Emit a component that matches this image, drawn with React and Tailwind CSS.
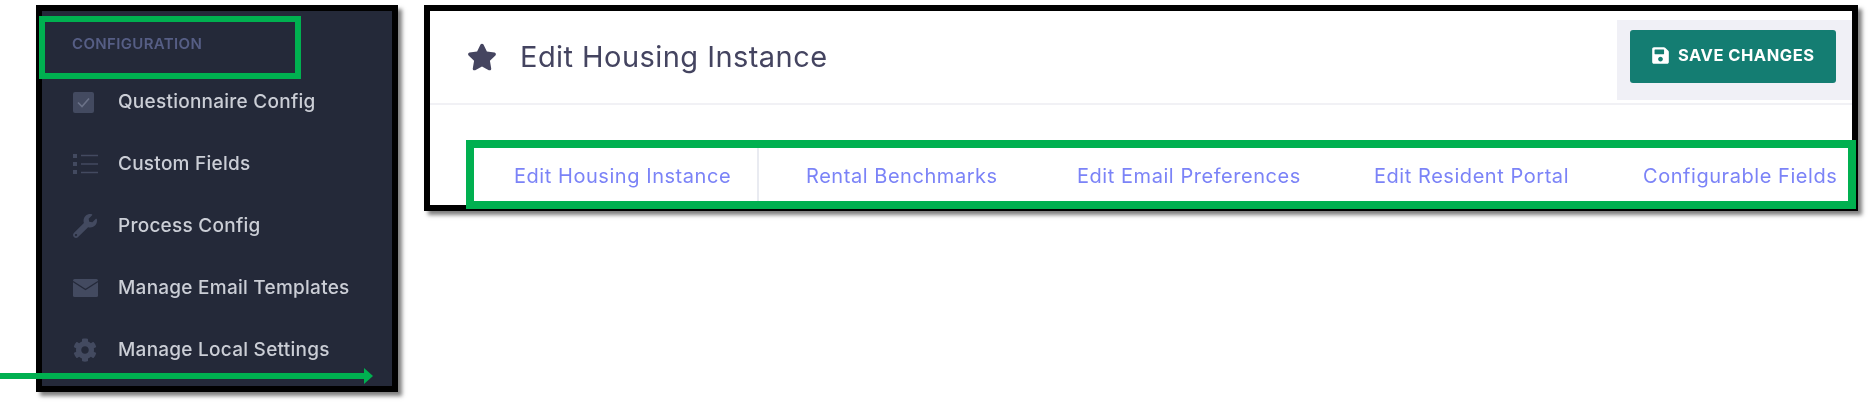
import React from "react";
import { FaStar, FaSave, FaWrench, FaCog } from "react-icons/fa";

const font = { fontFamily: '"Inter", "Noto Sans", sans-serif' };

const CheckIcon = () => (
  <svg width="21" height="21" viewBox="0 0 21 21" className="text-[#434a60]">
    <rect width="21" height="21" rx="2" fill="currentColor" />
    <path d="M5 10.5l4 4 7-8" fill="none" stroke="#6b7288" strokeWidth="1.6" />
  </svg>
);

const ListIcon = () => (
  <svg width="25" height="21" viewBox="0 0 25 21" className="text-[#434a60]">
    <rect x="0" y="0" width="4" height="4" fill="currentColor" />
    <rect x="0" y="8" width="4" height="4" fill="currentColor" />
    <rect x="0" y="16" width="4" height="4" fill="currentColor" />
    <path d="M8 1.5h17M8 10h17M8 18.5h17" stroke="currentColor" strokeWidth="1.4" />
  </svg>
);

const MailIcon = () => (
  <svg width="25" height="18" viewBox="0 0 25 18" className="text-[#434a60]">
    <rect width="25" height="18" rx="1.5" fill="currentColor" />
    <path d="M0 2.5l12.5 8 12.5-8" fill="none" stroke="#242939" strokeWidth="1.3" />
  </svg>
);

const menu = [
  { label: "Questionnaire Config", icon: <CheckIcon /> },
  { label: "Custom Fields", icon: <ListIcon /> },
  { label: "Process Config", icon: <FaWrench className="text-[#434a60]" size={24} /> },
  { label: "Manage Email Templates", icon: <MailIcon /> },
  { label: "Manage Local Settings", icon: <FaCog className="text-[#434a60]" size={24} /> },
];

const tabs = [
  { label: "Edit Housing Instance", cls: "w-[329px] pl-[84px] border-r-2 border-[#e9ebf1]" },
  { label: "Rental Benchmarks", cls: "w-[318px] pl-[47px]" },
  { label: "Edit Email Preferences", cls: "w-[297px]" },
  { label: "Edit Resident Portal", cls: "w-[269px]" },
  { label: "Configurable Fields", cls: "" },
];

export default function App() {
  return (
    <div className="relative h-[405px] w-[1871px] overflow-hidden bg-white pl-[36px] pt-[5px]" style={font}>
      <div className="flex items-start gap-[26px]">
        {/* Sidebar */}
        <div className="h-[387px] w-[362px] border-[6px] border-black bg-[#242939] pl-[30px] pt-[14px] shadow-[4px_4px_4px_rgba(0,0,0,0.5)]">
          <div className="blur-[0.4px]">
            <div className="flex h-[38px] items-center text-[15px] font-semibold tracking-[0.35px] text-[#565e85]">CONFIGURATION</div>
            <div className="mt-[20px] flex flex-col gap-[24px]">
              {menu.map((m) => (
                <div key={m.label} className="flex h-[38px] items-center">
                  <div className="flex w-[46px] shrink-0 pl-px">{m.icon}</div>
                  <span className="text-[19px] font-medium tracking-[0.25px] text-[#cbced6]">{m.label}</span>
                </div>
              ))}
            </div>
          </div>
        </div>

        {/* Main panel */}
        <div className="h-[206px] w-[1434px] border-[6px] border-black bg-white shadow-[4px_4px_4px_rgba(0,0,0,0.5)]">
          <div className="blur-[0.4px]">
            <div className="flex h-[94px] items-start justify-between border-b-2 border-[#f1f1f5] pl-[37px]">
              <div className="flex h-[92px] items-center">
                <FaStar className="text-[#454560]" size={30} />
                <h1 className="ml-[23px] text-[29px] font-normal tracking-[0.45px] text-[#444460]">Edit Housing Instance</h1>
              </div>
              <div className="mt-[9px] flex h-[80px] w-[235px] items-start bg-[#f0f0f6] pl-[13px] pt-[10px]">
                <button className="flex h-[53px] w-[206px] items-center rounded-[3px] bg-[#147d72] pb-[2px] pl-[21px] text-[16.5px] font-bold tracking-[0.5px] text-white">
                  <FaSave size={19} />
                  <span className="ml-[8px]">SAVE CHANGES</span>
                </button>
              </div>
            </div>
            <div className="mt-[43px] flex h-[53px] items-center text-[20px] tracking-[0.55px] whitespace-nowrap text-[#7b83f7]">
              {tabs.map((t) => (
                <div key={t.label} className={`flex h-full items-center pt-[2px] ${t.cls}`}>{t.label}</div>
              ))}
            </div>
          </div>
        </div>
      </div>

      {/* Annotations */}
      <div className="pointer-events-none absolute left-[39px] top-[16px] h-[63px] w-[262px] border-[6px] border-[#00b050]" />
      <div className="pointer-events-none absolute left-[466px] top-[140px] h-[69px] w-[1390px] border-8 border-[#00b050]" />
      <div className="pointer-events-none absolute left-0 top-[373px] h-[6px] w-[365px] bg-[#00b050]" />
      <svg className="absolute left-[364px] top-[368px]" width="9" height="16" viewBox="0 0 9 16">
        <path d="M0 0l9 8-9 8z" fill="#00b050" />
      </svg>
    </div>
  );
}
